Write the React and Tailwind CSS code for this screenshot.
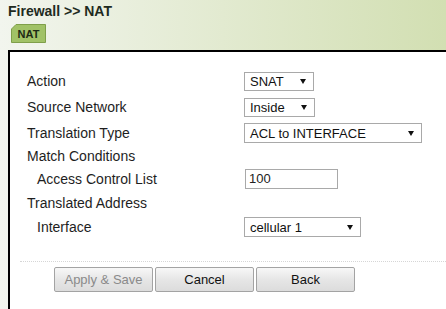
import React from "react";

function Arrow() {
  return (
    <svg width="6" height="5" viewBox="0 0 6 5" className="shrink-0">
      <polygon points="0,0 6,0 3,5" fill="#111" />
    </svg>
  );
}

function Select({ value, w, h }) {
  return (
    <div
      className={`${w} ${h} flex items-center justify-between border border-[#a9a9a9] bg-white pl-[5px] pr-[7px] text-[13px] leading-[15px] text-[#111]`}
    >
      <span>{value}</span>
      <Arrow />
    </div>
  );
}

function Row({ label, indent, h, children }) {
  return (
    <div className={`flex items-center ${h}`}>
      <div
        className={`w-[217px] shrink-0 text-[14px] leading-[16px] text-[#1e1e1e] ${indent ? "pl-[10px]" : ""}`}
      >
        {label}
      </div>
      {children}
    </div>
  );
}

function Button({ children, disabled }) {
  return (
    <div
      className={`w-[99px] h-[25px] flex items-center justify-center border border-[#a3a3a3] rounded-[2px] bg-[linear-gradient(to_bottom,#f7f7f7,#e6e6e6_50%,#dcdcdc)] text-[13px] ${disabled ? "text-[#8a8a8a]" : "text-[#111]"}`}
    >
      {children}
    </div>
  );
}

export default function App() {
  return (
    <div className="w-[446px] h-[309px] overflow-hidden flex flex-col bg-[linear-gradient(to_right,#f2f5ee,#d2dfb2)] font-['Liberation_Sans',Arial,sans-serif]">
      <div className="h-[50px] shrink-0 pl-[8px] pt-[3px]">
        <div className="text-[14px] font-bold leading-[16px] text-[#1f2b1f]">
          Firewall &gt;&gt; NAT
        </div>
        <div className="relative mt-[5px] ml-[3px] w-[35px] h-[19px] flex items-center justify-center">
          <svg
            width="35"
            height="19"
            viewBox="0 0 35 19"
            className="absolute inset-0"
          >
            <polygon
              points="5,0.5 34.5,0.5 34.5,18.5 0.5,18.5 0.5,5"
              fill="#a1c267"
              stroke="#7f9f4a"
              strokeWidth="1"
            />
          </svg>
          <span className="relative text-[11px] font-bold leading-[12px] text-[#1d2a14]">
            NAT
          </span>
        </div>
      </div>
      <div className="flex-1 ml-[8px] bg-white border-l-2 border-t-2 border-black">
        <div className="pt-[16px] pl-[17px]">
          <Row label="Action" h="h-[26px]">
            <Select value="SNAT" w="w-[70px]" h="h-[19px]" />
          </Row>
          <Row label="Source Network" h="h-[26px]">
            <Select value="Inside" w="w-[71px]" h="h-[19px]" />
          </Row>
          <Row label="Translation Type" h="h-[26px]">
            <Select value="ACL to INTERFACE" w="w-[178px]" h="h-[20px]" />
          </Row>
          <Row label="Match Conditions" h="h-[20px]" />
          <Row label="Access Control List" indent h="h-[26px]">
            <div className="ml-[1px] w-[93px] h-[20px] flex items-center border border-[#a9a9a9] bg-white pl-[3px] text-[13px] text-[#222]">
              100
            </div>
          </Row>
          <Row label="Translated Address" h="h-[22px]" />
          <Row label="Interface" indent h="h-[26px]">
            <Select value="cellular 1" w="w-[117px]" h="h-[20px]" />
          </Row>
        </div>
        <div className="mt-[21px] ml-[10px] border-t border-dotted border-[#d6d6d6]" />
        <div className="mt-[5px] pl-[44px] flex gap-[2px]">
          <Button disabled>Apply &amp; Save</Button>
          <Button>Cancel</Button>
          <Button>Back</Button>
        </div>
      </div>
    </div>
  );
}
